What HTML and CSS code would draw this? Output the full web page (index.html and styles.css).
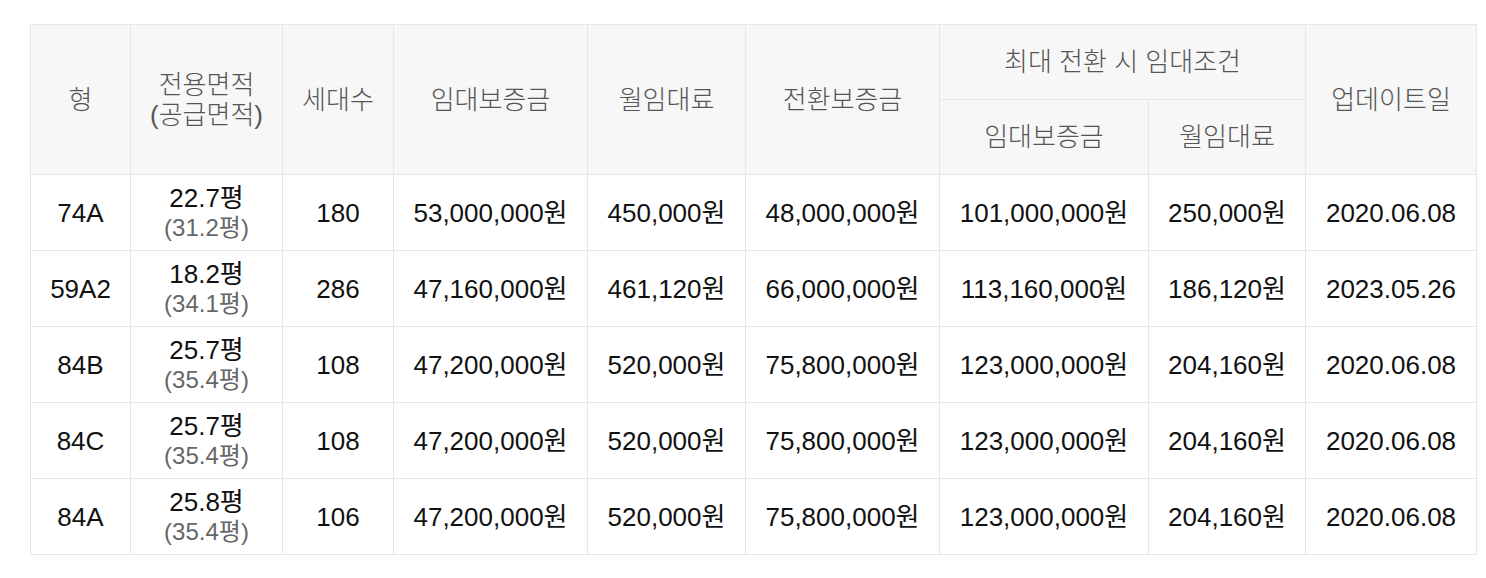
FILE: index.html
```html
<!DOCTYPE html>
<html lang="ko">
<head>
<meta charset="utf-8">
<link rel="stylesheet" href="styles.css">
</head>
<body>
<div class="wrap">
<table class="rent">
  <colgroup>
    <col class="c1"><col class="c2"><col class="c3"><col class="c4"><col class="c5"><col class="c6"><col class="c7"><col class="c8"><col class="c9">
  </colgroup>
  <thead>
    <tr class="h1">
      <th rowspan="2">형</th>
      <th rowspan="2">전용면적<br>(공급면적)</th>
      <th rowspan="2">세대수</th>
      <th rowspan="2">임대보증금</th>
      <th rowspan="2">월임대료</th>
      <th rowspan="2">전환보증금</th>
      <th colspan="2">최대 전환 시 임대조건</th>
      <th rowspan="2">업데이트일</th>
    </tr>
    <tr class="h2">
      <th>임대보증금</th>
      <th>월임대료</th>
    </tr>
  </thead>
  <tbody>
    <tr>
      <td>74A</td>
      <td><div class="area">22.7평</div><div class="supply">(31.2평)</div></td>
      <td>180</td>
      <td>53,000,000원</td>
      <td>450,000원</td>
      <td>48,000,000원</td>
      <td>101,000,000원</td>
      <td>250,000원</td>
      <td>2020.06.08</td>
    </tr>
    <tr>
      <td>59A2</td>
      <td><div class="area">18.2평</div><div class="supply">(34.1평)</div></td>
      <td>286</td>
      <td>47,160,000원</td>
      <td>461,120원</td>
      <td>66,000,000원</td>
      <td>113,160,000원</td>
      <td>186,120원</td>
      <td>2023.05.26</td>
    </tr>
    <tr>
      <td>84B</td>
      <td><div class="area">25.7평</div><div class="supply">(35.4평)</div></td>
      <td>108</td>
      <td>47,200,000원</td>
      <td>520,000원</td>
      <td>75,800,000원</td>
      <td>123,000,000원</td>
      <td>204,160원</td>
      <td>2020.06.08</td>
    </tr>
    <tr>
      <td>84C</td>
      <td><div class="area">25.7평</div><div class="supply">(35.4평)</div></td>
      <td>108</td>
      <td>47,200,000원</td>
      <td>520,000원</td>
      <td>75,800,000원</td>
      <td>123,000,000원</td>
      <td>204,160원</td>
      <td>2020.06.08</td>
    </tr>
    <tr>
      <td>84A</td>
      <td><div class="area">25.8평</div><div class="supply">(35.4평)</div></td>
      <td>106</td>
      <td>47,200,000원</td>
      <td>520,000원</td>
      <td>75,800,000원</td>
      <td>123,000,000원</td>
      <td>204,160원</td>
      <td>2020.06.08</td>
    </tr>
  </tbody>
</table>
</div>
</body>
</html>
```
FILE: styles.css
```css
html, body {
  margin: 0;
  padding: 0;
  background: #ffffff;
}
.wrap {
  padding: 24px 10px 0 30px;
}
.rent {
  width: 1446px;
  table-layout: fixed;
  border-collapse: collapse;
  font-family: "Liberation Sans", "Noto Sans CJK KR", Arial, sans-serif;
  font-size: 26px;
  color: #111111;
  border-top: 1px solid #cccccc;
}
.c1 { width: 100px; }
.c2 { width: 152px; }
.c3 { width: 111px; }
.c4 { width: 194px; }
.c5 { width: 158px; }
.c6 { width: 194px; }
.c7 { width: 209px; }
.c8 { width: 157px; }
.c9 { width: 171px; }
.rent th, .rent td {
  border: 1px solid #e6e6e6;
  text-align: center;
  vertical-align: middle;
  padding: 0 4px;
}
.rent th {
  background: #f7f7f7;
  color: #555555;
  font-weight: 300;
  font-size: 26px;
  line-height: 30px;
}
.rent thead tr { height: 75px; }
.rent tbody tr { height: 76px; }
.rent td { line-height: 30px; }
.supply {
  color: #666666;
  font-size: 24px;
  line-height: 30px;
}
```
